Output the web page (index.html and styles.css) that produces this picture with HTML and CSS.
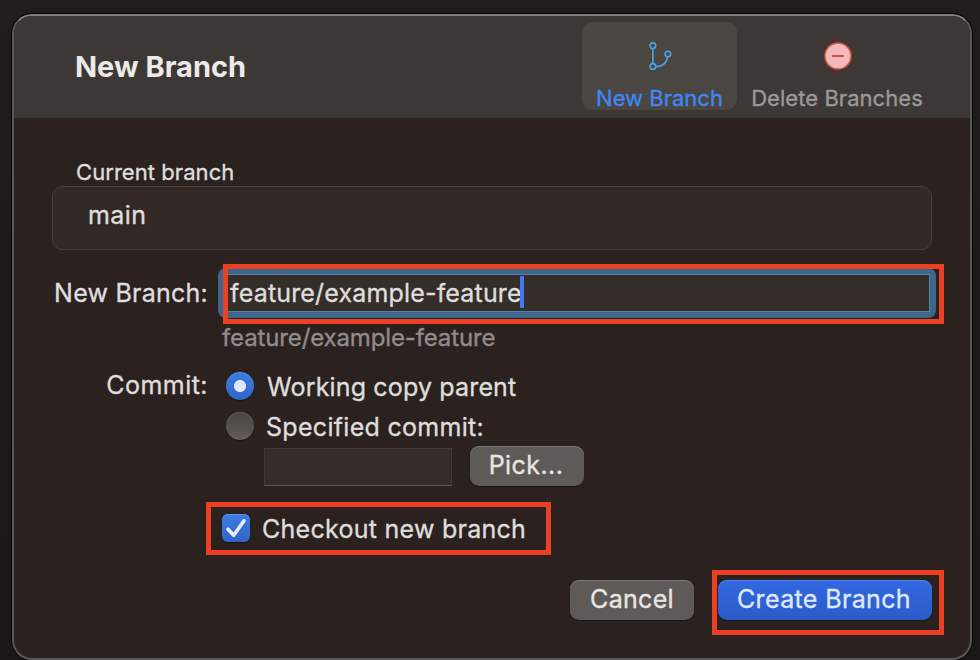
FILE: index.html
```
<!DOCTYPE html>
<html lang="en">
<head>
<meta charset="utf-8">
<title>New Branch</title>
<link rel="stylesheet" href="styles.css">
</head>
<body>
<main class="dialog">
  <header class="toolbar">
    <h1 class="title">New Branch</h1>
    <nav class="tabs">
      <div class="tab tab-active">
        <svg class="tab-icon" width="28" height="32" viewBox="0 0 28 32" fill="none" stroke="#4da3e8" stroke-width="1.6">
          <circle cx="6.9" cy="4.7" r="2.8"/>
          <circle cx="6.9" cy="25.4" r="2.8"/>
          <circle cx="21.9" cy="13" r="2.8"/>
          <path d="M6.9 7.5V22.6M9.7 25.5C16 26.2 20.8 21.7 21.6 15.8"/>
        </svg>
        <span>New Branch</span>
      </div>
      <div class="tab tab-delete">
        <svg class="tab-icon" width="30" height="32" viewBox="0 0 30 32">
          <circle cx="16" cy="15" r="13.1" fill="#f5b8ba" stroke="#d0513f" stroke-width="1.5"/>
          <path d="M10.8 15H21.2" stroke="#c9503f" stroke-width="1.9" stroke-linecap="round"/>
        </svg>
        <span>Delete Branches</span>
      </div>
    </nav>
  </header>

  <section class="content">
    <div class="caption">Current branch</div>
    <div class="group-box">main</div>

    <div class="row name-row">
      <label class="row-label name-label">New Branch:</label>
      <div class="focus-ring"><div class="name-field"><span class="name-text">feature/example-feature</span><i class="caret"></i></div></div>
    </div>
    <div class="hint">feature/example-feature</div>

    <div class="row commit-row">
      <label class="row-label commit-label">Commit:</label>
      <div class="options">
        <div class="option"><i class="radio radio-on"></i><span class="text-working">Working copy parent</span></div>
        <div class="option"><i class="radio"></i><span class="text-specified">Specified commit:</span></div>
        <div class="pick-row">
          <div class="commit-field"></div>
          <button class="button button-pick">Pick...</button>
        </div>
      </div>
    </div>

    <div class="checkout">
      <svg class="checkbox" width="28" height="28" viewBox="0 0 28 28" fill="none">
        <path d="M5.9 15.2L11.7 21.2L22 6.8" stroke="#e6eefc" stroke-width="3.6" stroke-linecap="round" stroke-linejoin="round"/>
      </svg>
      <span>Checkout new branch</span>
    </div>

    <footer class="actions">
      <button class="button button-cancel">Cancel</button>
      <button class="button button-create">Create Branch</button>
    </footer>
  </section>
</main>
<div class="highlight highlight-name"></div>
<div class="highlight highlight-checkout"></div>
<div class="highlight highlight-create"></div>
</body>
</html>
```
FILE: styles.css
```
* {
  box-sizing: border-box;
}

body {
  position: relative;
  width: 980px;
  height: 660px;
  margin: 0;
  padding: 14px 8px 0 12px;
  overflow: hidden;
  background: linear-gradient(#221d1a, #1b1714);
  color: #dfdddc;
  font: 400 25px/30px Inter, "Liberation Sans", sans-serif;
  white-space: nowrap;
  -webkit-text-stroke: .35px currentColor;
}

.dialog {
  height: 646px;
  overflow: hidden;
  border: 2px solid #5c5856;
  border-top-color: #81807e;
  border-radius: 20px;
  background: #2b2220;
  box-shadow: 0 0 0 1px #000;
}

.toolbar {
  display: flex;
  justify-content: space-between;
  height: 102px;
  padding: 6px 33px 0 61px;
  background: #3d3835;
}

.title {
  margin: 27px 0 0;
  color: #ebeae9;
  font-size: 29px;
  font-weight: 700;
  line-height: 36px;
  -webkit-text-stroke: 0;
}

.tabs {
  display: flex;
}

.tab {
  display: flex;
  flex-direction: column;
  align-items: center;
  width: 155px;
  height: 88px;
  padding-top: 19px;
  border-radius: 11px;
  color: #9b9896;
  font-size: 22px;
  line-height: 26px;
}

.tab-icon {
  flex: none;
  margin-bottom: 12px;
}

.tab-active {
  background: #4a4642;
  color: #3f86f7;
}

.tab-delete {
  width: 200px;
  letter-spacing: .05px;
}

.caption {
  margin: 41px 0 1px 62px;
  font-size: 22px;
  line-height: 26px;
  letter-spacing: .06px;
}

.group-box {
  height: 64px;
  margin: 0 38px;
  padding: 13px 35px;
  border: 1px solid #46403c;
  border-radius: 10px;
  background: #322927;
  letter-spacing: .4px;
}

.row {
  display: flex;
}

.row-label {
  width: 195px;
  padding-right: 1px;
  text-align: right;
}

.name-row {
  margin-top: 18px;
}

.name-label {
  padding-top: 10px;
  letter-spacing: .24px;
}

.focus-ring {
  width: 718px;
  margin-left: 9px;
  padding: 6px;
  border-radius: 8px;
  background: #3e658c;
}

.name-field {
  display: flex;
  align-items: center;
  height: 38px;
  padding-left: 5px;
  border: 1px solid #5580a8;
  background: #342d29;
}

.name-text {
  letter-spacing: .17px;
}

.caret {
  width: 4px;
  height: 32px;
  margin: -2px 0 0 -2px;
  border-radius: 1px;
  background: #3b7cf6;
}

.hint {
  margin: 6px 0 0 208px;
  color: #918c89;
  font-size: 24px;
  line-height: 28px;
  letter-spacing: -.13px;
}

.commit-row {
  margin-top: 18px;
}

.commit-label {
  letter-spacing: .45px;
}

.options {
  margin: 2px 0 0 17px;
}

.option {
  display: flex;
  gap: 12px;
  height: 30px;
  margin-bottom: 10px;
}

.radio {
  width: 28px;
  height: 28px;
  border-radius: 50%;
  background: linear-gradient(#494340, #625d5a);
  box-shadow: inset 0 1px 0 #5f5a57, 0 1px 1px #1c1614;
}

.radio-on {
  background: radial-gradient(circle, #dfe9fb 5.6px, transparent 6.4px), linear-gradient(#3c7de3, #2f66c4);
  box-shadow: inset 0 1px 0 #5c93ea, 0 1px 1px #1c1614;
}

.text-working {
  margin-left: 1px;
  letter-spacing: .16px;
}

.text-specified {
  letter-spacing: .3px;
}

.pick-row {
  display: flex;
  align-items: flex-end;
  gap: 18px;
  margin: -6px 0 0 38px;
}

.commit-field {
  width: 188px;
  height: 38px;
  border: 1px solid #403935;
  border-bottom-color: #5f5a56;
  background: #342d29;
}

.button {
  height: 40px;
  padding: 0 0 2px;
  border: 0;
  border-radius: 9px;
  background: #5f5a57;
  box-shadow: inset 0 1px 0 #7b7673, 0 1px 1px #1a1513;
  color: #e8e6e5;
  font: inherit;
}

.button-pick {
  width: 114px;
  padding-right: 2px;
  letter-spacing: .43px;
}

.checkout {
  display: flex;
  gap: 12px;
  margin: 28px 0 0 208px;
  letter-spacing: .27px;
}

.checkbox {
  border-radius: 6px;
  background: linear-gradient(#3c7de3, #2f66c4);
  box-shadow: inset 0 1px 0 #5c93ea, 0 1px 1px #1c1614;
}

.actions {
  display: flex;
  justify-content: flex-end;
  gap: 24px;
  margin: 36px 38px 0 0;
}

.button-cancel {
  width: 124px;
  letter-spacing: .31px;
}

.button-create {
  width: 214px;
  padding-right: 2px;
  background: linear-gradient(#3268e2, #2b5bc8);
  box-shadow: inset 0 1px 0 #5581e8, 0 1px 1px #1a1513;
  color: #dfe7fb;
  letter-spacing: .36px;
}

.highlight {
  position: absolute;
  border: 5px solid #ec4024;
}

.highlight-name {
  left: 223px;
  top: 264px;
  width: 721px;
  height: 60px;
}

.highlight-checkout {
  left: 206px;
  top: 502px;
  width: 345px;
  height: 53px;
}

.highlight-create {
  left: 712px;
  top: 570px;
  width: 232px;
  height: 65px;
}
```
